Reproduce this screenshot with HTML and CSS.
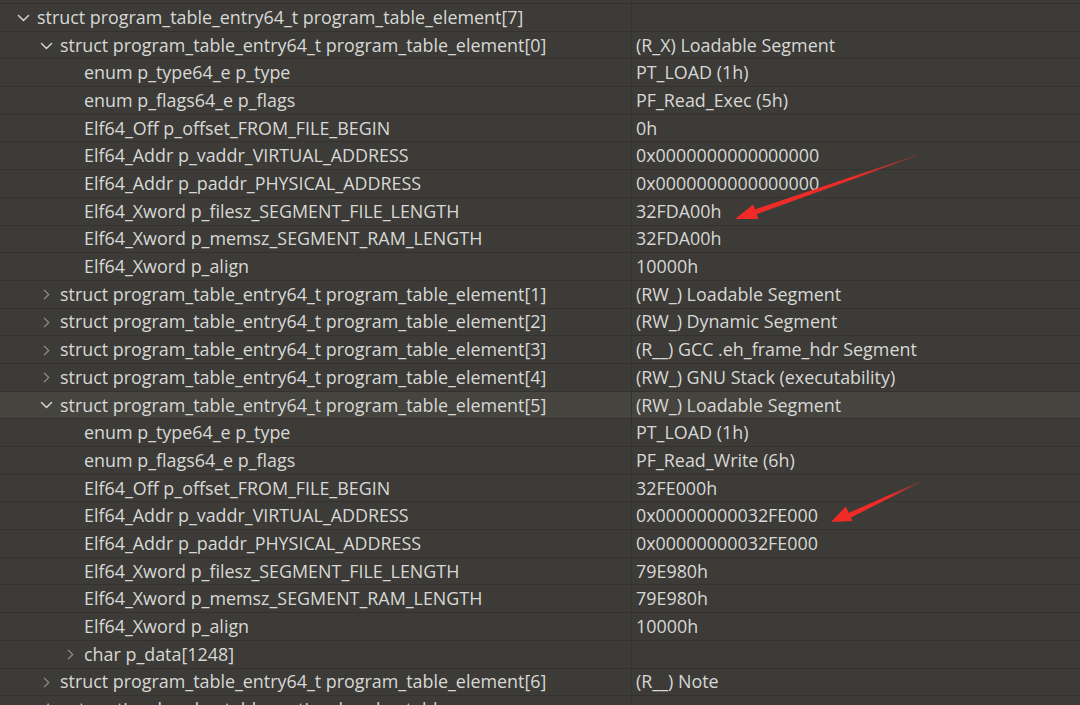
FILE: index.html
```html
<!DOCTYPE html>
<html>
<head>
<meta charset="utf-8">
<link rel="stylesheet" href="styles.css">
</head>
<body>
<div class="tree">
  <div class="row"><div class="name l0"><span class="chev down"><svg viewBox="0 0 12 8"><path d="M1 1.5 L6 6.5 L11 1.5"/></svg></span>struct program_header_table program_header_table</div><div class="val"></div></div>
  <div class="row"><div class="name l1"><span class="chev down"><svg viewBox="0 0 12 8"><path d="M1 1.5 L6 6.5 L11 1.5"/></svg></span>struct program_table_entry64_t program_table_element[7]</div><div class="val"></div></div>
  <div class="row"><div class="name l2"><span class="chev down"><svg viewBox="0 0 12 8"><path d="M1 1.5 L6 6.5 L11 1.5"/></svg></span>struct program_table_entry64_t program_table_element[0]</div><div class="val">(R_X) Loadable Segment</div></div>
  <div class="row"><div class="name l3">enum p_type64_e p_type</div><div class="val">PT_LOAD (1h)</div></div>
  <div class="row"><div class="name l3">enum p_flags64_e p_flags</div><div class="val">PF_Read_Exec (5h)</div></div>
  <div class="row"><div class="name l3">Elf64_Off p_offset_FROM_FILE_BEGIN</div><div class="val">0h</div></div>
  <div class="row"><div class="name l3">Elf64_Addr p_vaddr_VIRTUAL_ADDRESS</div><div class="val">0x0000000000000000</div></div>
  <div class="row"><div class="name l3">Elf64_Addr p_paddr_PHYSICAL_ADDRESS</div><div class="val">0x0000000000000000</div></div>
  <div class="row"><div class="name l3">Elf64_Xword p_filesz_SEGMENT_FILE_LENGTH</div><div class="val">32FDA00h</div></div>
  <div class="row"><div class="name l3">Elf64_Xword p_memsz_SEGMENT_RAM_LENGTH</div><div class="val">32FDA00h</div></div>
  <div class="row"><div class="name l3">Elf64_Xword p_align</div><div class="val">10000h</div></div>
  <div class="row"><div class="name l2"><span class="chev right"><svg viewBox="0 0 8 12"><path d="M1.5 1 L6.5 6 L1.5 11"/></svg></span>struct program_table_entry64_t program_table_element[1]</div><div class="val">(RW_) Loadable Segment</div></div>
  <div class="row"><div class="name l2"><span class="chev right"><svg viewBox="0 0 8 12"><path d="M1.5 1 L6.5 6 L1.5 11"/></svg></span>struct program_table_entry64_t program_table_element[2]</div><div class="val">(RW_) Dynamic Segment</div></div>
  <div class="row"><div class="name l2"><span class="chev right"><svg viewBox="0 0 8 12"><path d="M1.5 1 L6.5 6 L1.5 11"/></svg></span>struct program_table_entry64_t program_table_element[3]</div><div class="val">(R__) GCC .eh_frame_hdr Segment</div></div>
  <div class="row"><div class="name l2"><span class="chev right"><svg viewBox="0 0 8 12"><path d="M1.5 1 L6.5 6 L1.5 11"/></svg></span>struct program_table_entry64_t program_table_element[4]</div><div class="val">(RW_) GNU Stack (executability)</div></div>
  <div class="row sel"><div class="name l2"><span class="chev down"><svg viewBox="0 0 12 8"><path d="M1 1.5 L6 6.5 L11 1.5"/></svg></span>struct program_table_entry64_t program_table_element[5]</div><div class="val">(RW_) Loadable Segment</div></div>
  <div class="row"><div class="name l3">enum p_type64_e p_type</div><div class="val">PT_LOAD (1h)</div></div>
  <div class="row"><div class="name l3">enum p_flags64_e p_flags</div><div class="val">PF_Read_Write (6h)</div></div>
  <div class="row"><div class="name l3">Elf64_Off p_offset_FROM_FILE_BEGIN</div><div class="val">32FE000h</div></div>
  <div class="row"><div class="name l3">Elf64_Addr p_vaddr_VIRTUAL_ADDRESS</div><div class="val">0x00000000032FE000</div></div>
  <div class="row"><div class="name l3">Elf64_Addr p_paddr_PHYSICAL_ADDRESS</div><div class="val">0x00000000032FE000</div></div>
  <div class="row"><div class="name l3">Elf64_Xword p_filesz_SEGMENT_FILE_LENGTH</div><div class="val">79E980h</div></div>
  <div class="row"><div class="name l3">Elf64_Xword p_memsz_SEGMENT_RAM_LENGTH</div><div class="val">79E980h</div></div>
  <div class="row"><div class="name l3">Elf64_Xword p_align</div><div class="val">10000h</div></div>
  <div class="row"><div class="name l3"><span class="chev right"><svg viewBox="0 0 8 12"><path d="M1.5 1 L6.5 6 L1.5 11"/></svg></span>char p_data[1248]</div><div class="val"></div></div>
  <div class="row"><div class="name l2"><span class="chev right"><svg viewBox="0 0 8 12"><path d="M1.5 1 L6.5 6 L1.5 11"/></svg></span>struct program_table_entry64_t program_table_element[6]</div><div class="val">(R__) Note</div></div>
  <div class="row"><div class="name l1"><span class="chev right"><svg viewBox="0 0 8 12"><path d="M1.5 1 L6.5 6 L1.5 11"/></svg></span>struct section_header_table section_header_table</div><div class="val"></div></div>
</div>
<svg class="arrows" viewBox="0 0 1080 705" width="1080" height="705">
  <defs>
    <linearGradient id="g1" gradientUnits="userSpaceOnUse" x1="918" y1="155" x2="740" y2="217">
      <stop offset="0" stop-color="#e8322e" stop-opacity="0.2"/>
      <stop offset="0.35" stop-color="#ee2b28"/>
      <stop offset="1" stop-color="#f02a27"/>
    </linearGradient>
    <linearGradient id="g2" gradientUnits="userSpaceOnUse" x1="920" y1="482" x2="835" y2="520">
      <stop offset="0" stop-color="#e8322e" stop-opacity="0.2"/>
      <stop offset="0.35" stop-color="#ee2b28"/>
      <stop offset="1" stop-color="#f02a27"/>
    </linearGradient>
  </defs>
  <polygon fill="url(#g1)" points="918,154.6 918.3,155.4 756.5,214.2 754.8,209.4"/>
  <polygon fill="#f02a27" points="735,219 758.5,219 753.2,204.5"/>
  <polygon fill="url(#g2)" points="920,481.6 920.3,482.4 850,518.0 847.8,513.3"/>
  <polygon fill="#f02a27" points="831,522 852.5,521.0 845.8,506.5"/>
</svg>
</body>
</html>
```
FILE: styles.css
```css
html, body {
  margin: 0;
  padding: 0;
  background: #3c3b37;
  overflow: hidden;
}
body {
  width: 1080px;
  height: 705px;
  position: relative;
  font-family: "Open Sans", "Noto Sans", sans-serif;
  font-size: 17.9px;
  color: #d8d8d6;
}
.tree {
  margin-top: -23.7px;
}
.row {
  display: grid;
  grid-template-columns: 632px 1fr;
  height: 27.7px;
  box-sizing: border-box;
  border-bottom: 1px solid #33322f;
}
.row.sel {
  background: #45443f;
}
.name, .val {
  display: flex;
  align-items: center;
  white-space: nowrap;
  overflow: hidden;
  line-height: 1;
  padding-top: 1px;
}
.name {
  border-right: 1px solid #33322f;
}
.val {
  padding-left: 4px;
}
.l0 { padding-left: 14px; }
.l1 { padding-left: 37px; }
.l2 { padding-left: 60px; }
.l3 { padding-left: 84px; }
.chev {
  display: inline-flex;
  align-items: center;
  justify-content: center;
  width: 16px;
  margin-left: -22px;
  margin-right: 6px;
}
.chev svg {
  fill: none;
  stroke-width: 1.5;
  stroke-linecap: round;
  stroke-linejoin: round;
}
.chev.down svg {
  width: 13px;
  height: 8px;
  stroke: #d2d2d0;
}
.chev.right svg {
  width: 7px;
  height: 13px;
  stroke: #8c8b87;
}
.arrows {
  position: absolute;
  left: 0;
  top: 0;
  pointer-events: none;
}
```
